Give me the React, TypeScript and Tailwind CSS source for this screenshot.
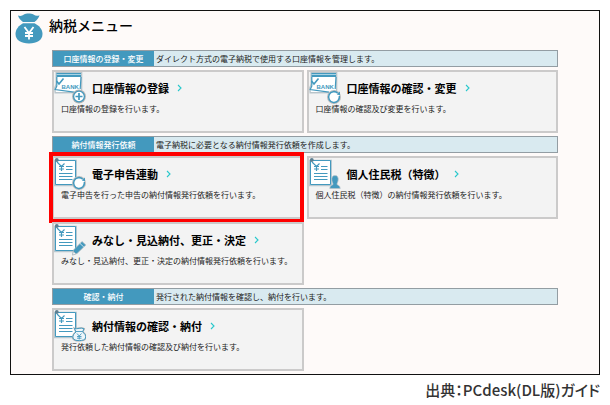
import type { ReactNode } from "react";

const BLUE = "#4399be";

type Badge = "plus" | "refresh" | "person" | "pencil" | "bag";

function MoneyBag({ className }: { className: string }) {
  return (
    <svg viewBox="0 0 28 31" className={className} aria-hidden="true">
      <path
        d="M3 2.500C5 3.200 7 3 9 1.600C11 .2 16 .2 18.500 1.600C20.500 3 22.500 3.200 24.500 2.200C24 4.500 22 7 19.500 9H8C5.500 7 3.500 5 3 2.500Z"
        fill={BLUE}
      />
      <path
        d="M8 10.200H19.500C24 12.500 27.500 16 27.500 21C27.500 27 22 30.500 14 30.500C6 30.500 .5 27 .5 21C.5 16 4 12.500 8 10.200Z"
        fill={BLUE}
      />
      <path d="M9.500 14L14 20L18.500 14M14 20V26.500M10 20H18M10 23H18" fill="none" stroke="#fff" strokeWidth="1.800" />
    </svg>
  );
}

function BadgeShape({ kind }: { kind: Badge }) {
  switch (kind) {
    case "plus":
      return (
        <g>
          <circle cx="25" cy="24.500" r="6.900" fill="#b4b4b4" />
          <circle cx="25" cy="24.500" r="5.400" fill="#fff" stroke={BLUE} strokeWidth="1.300" />
          <path d="M25 21V28M21.500 24.500H28.500" stroke={BLUE} strokeWidth="1.700" />
        </g>
      );
    case "refresh":
      return (
        <g>
          <circle cx="25" cy="25" r="7" fill="#bdbdbd" />
          <circle cx="25" cy="25" r="5.800" fill="#fff" />
          <path d="M28.800 21.200A5.400 5.400 0 1 0 30.300 24" fill="none" stroke={BLUE} strokeWidth="1.500" />
          <path d="M31 19.500V23.200L27.800 22.500Z" fill={BLUE} />
        </g>
      );
    case "person":
      return (
        <path
          d="M26 17.500C28.500 17.500 29.500 19.500 29.200 22C29 24 28 25 28 26.500C29.500 27.500 31 27.500 31.200 30.500H20.800C21 27.500 22.500 27.500 24 26.500C24 25 23 24 22.800 22C22.500 19.500 23.500 17.500 26 17.500Z"
          fill={BLUE}
          stroke="#b9c3c8"
          strokeWidth="0.700"
        />
      );
    case "pencil":
      return (
        <g stroke="#aeb9be" strokeWidth="0.700">
          <path d="M18.500 31L19.500 26L28 17.500L31.800 21L23 29.500Z" fill={BLUE} />
          <path d="M18.500 31L19.500 27.500L21.800 29.800Z" fill="#fff" />
          <path d="M26 19.500L29.800 23" stroke="#fff" />
        </g>
      );
    case "bag":
      return (
        <g>
          <path
            d="M20.500 18.500C23 19.500 27 17 30 18.800L28.500 22C31 23.500 32 25.500 31.500 28C31 31.500 19.500 31.500 19 28C18.500 25.500 20 23.500 22 22Z"
            fill="#fff"
            stroke="#b5b5b5"
            strokeWidth="1.800"
          />
          <path
            d="M20.500 18.500C23 19.500 27 17 30 18.800L28.500 22C31 23.500 32 25.500 31.500 28C31 31.500 19.500 31.500 19 28C18.500 25.500 20 23.500 22 22Z"
            fill="#eef6fa"
            stroke={BLUE}
            strokeWidth="1"
          />
          <path
            d="M22 21.500H28.500M23 23.500L25.200 26L27.500 23.500M25.200 26V29.500M23 26.500H27.500M23 28.200H27.500"
            fill="none"
            stroke={BLUE}
            strokeWidth="0.900"
          />
        </g>
      );
  }
}

function BankIcon({ badge }: { badge: Badge }) {
  return (
    <svg viewBox="0 0 32 32" className="size-8 shrink-0" aria-hidden="true">
      <path d="M2.200 .8H27.600V18L27 20.500L1.200 20.800L.8 16L2.200 12Z" fill="#fff" stroke="#b8c4ca" strokeWidth="1.400" />
      <path d="M2.500 1H27V5H2.500Z" fill={BLUE} />
      <path d="M2.500 2.500H27" stroke="#a9d3e4" strokeWidth="1" />
      <path d="M2.800 5V14L1.200 17.500L20 20.200M27 5L26.200 17" fill="none" stroke={BLUE} strokeWidth="1.200" />
      <path d="M2.500 9L5 12L9.500 6.500" fill="none" stroke={BLUE} strokeWidth="1.600" />
      <text x="7.500" y="16.500" fontSize="6" fontWeight="700" fill={BLUE} fontFamily="Liberation Sans, sans-serif">
        BANK
      </text>
      <BadgeShape kind={badge} />
    </svg>
  );
}

function SlipIcon({ badge }: { badge: Badge }) {
  return (
    <svg viewBox="0 0 32 32" className="size-8 shrink-0" aria-hidden="true">
      <path d="M.8 2.500H22.200V27.500H.8Z" fill="#fff" stroke="#b8c8d0" strokeWidth="1.600" />
      <path d="M1.500 2.500H21.500V26.500H1.500Z" fill="#fff" stroke={BLUE} strokeWidth="1" />
      <circle cx="2.800" cy="2" r="1.900" fill="#5d7f91" />
      <path
        d="M3 4L7.500 8.500L10.500 5.500M7.500 8.500V13M5 8.500H10M5 11H10"
        fill="none"
        stroke={BLUE}
        strokeWidth="1.200"
      />
      <path
        d="M12 8.500H18.500M12 11.500H18.500M5 15.500H18.500M5 18.500H18.500M5 21.500H18.500"
        stroke={BLUE}
        strokeWidth="1"
      />
      <BadgeShape kind={badge} />
    </svg>
  );
}

function MenuCard({
  icon,
  title,
  text,
  highlighted = false,
}: {
  icon: ReactNode;
  title: string;
  text: string;
  highlighted?: boolean;
}) {
  return (
    <article className="relative h-[63px] border-2 border-[#cbcaca] bg-[#f3f3f3]">
      <a href="#" className="flex h-8 items-center whitespace-nowrap text-[11px] font-bold text-black">
        {icon}
        <h3 className="ml-1.5">{title}</h3>
        <svg viewBox="0 0 5 8" className="ml-2 h-2 w-[5px]" aria-hidden="true">
          <path d="M1 1L4 4L1 7" fill="none" stroke="#27c8cc" strokeWidth="1.100" />
        </svg>
      </a>
      <p className="ml-[7px] whitespace-nowrap text-[8px] leading-[10px] text-[#222]">{text}</p>
      {highlighted && <span className="absolute -inset-x-[5px] -inset-y-[6px] mr-[3px] border-4 border-[#ff0000]" />}
    </article>
  );
}

function MenuSection({ label, lead, children }: { label: string; lead: string; children: ReactNode }) {
  return (
    <section className="flex flex-col gap-[3px]">
      <div className="flex h-[17px] items-center border border-[#939da3] bg-[#d9eaf0] text-[8px] leading-[15px]">
        <h2 className="w-[101px] shrink-0 bg-[#4399be] text-center font-medium text-white">{label}</h2>
        <p className="ml-0.5 whitespace-nowrap text-[#222]">{lead}</p>
      </div>
      <div className="grid grid-cols-2 gap-[3px]">{children}</div>
    </section>
  );
}

export default function App() {
  return (
    <div className="bg-white px-[10px] pt-[10px] font-['Noto_Sans_CJK_JP','Noto_Sans',sans-serif]">
      <main className="border border-[#111] bg-[#fefaf9] pb-[3px]">
        <header className="flex h-[39px] items-start gap-1.5 pl-1 pt-0.5">
          <MoneyBag className="h-[31px] w-7" />
          <h1 className="pt-0.5 text-[14px] font-medium leading-5 text-black">納税メニュー</h1>
        </header>
        <div className="flex flex-col gap-[3px] px-[41px]">
          <MenuSection label="口座情報の登録・変更" lead="ダイレクト方式の電子納税で使用する口座情報を管理します。">
            <MenuCard icon={<BankIcon badge="plus" />} title="口座情報の登録" text="口座情報の登録を行います。" />
            <MenuCard icon={<BankIcon badge="refresh" />} title="口座情報の確認・変更" text="口座情報の確認及び変更を行います。" />
          </MenuSection>
          <MenuSection label="納付情報発行依頼" lead="電子納税に必要となる納付情報発行依頼を作成します。">
            <MenuCard
              icon={<SlipIcon badge="refresh" />}
              title="電子申告連動"
              text="電子申告を行った申告の納付情報発行依頼を行います。"
              highlighted
            />
            <MenuCard
              icon={<SlipIcon badge="person" />}
              title="個人住民税（特徴）"
              text="個人住民税（特徴）の納付情報発行依頼を行います。"
            />
            <MenuCard
              icon={<SlipIcon badge="pencil" />}
              title="みなし・見込納付、更正・決定"
              text="みなし・見込納付、更正・決定の納付情報発行依頼を行います。"
            />
          </MenuSection>
          <MenuSection label="確認・納付" lead="発行された納付情報を確認し、納付を行います。">
            <MenuCard
              icon={<SlipIcon badge="bag" />}
              title="納付情報の確認・納付"
              text="発行依頼した納付情報の確認及び納付を行います。"
            />
          </MenuSection>
        </div>
      </main>
      <footer className="pt-[5px] text-right text-[15px] font-medium leading-5 text-[#333] [font-feature-settings:'palt']">
        出典：PCdesk(DL版)ガイド
      </footer>
    </div>
  );
}
